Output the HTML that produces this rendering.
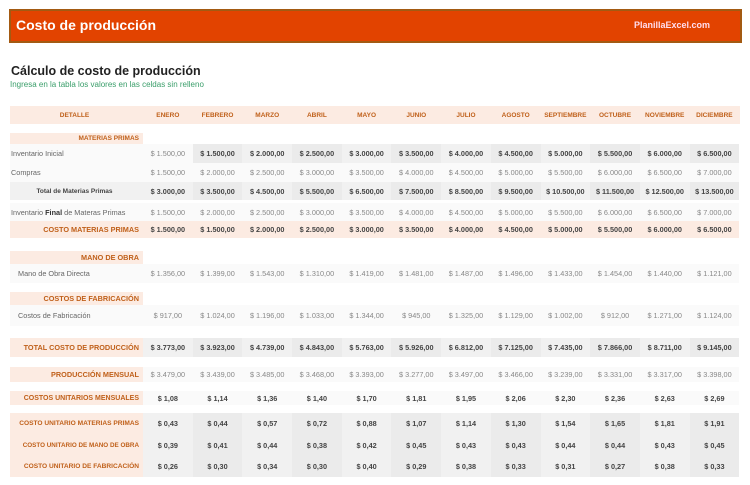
<!DOCTYPE html>
<html><head><meta charset="utf-8"><style>
body{margin:0;width:750px;height:485px;background:#fff;font-family:"Liberation Sans",sans-serif;position:relative;overflow:hidden}
.bar{position:absolute;left:9px;top:9px;width:729px;height:30px;background:#e24300;border:2px solid #a35a12}
.bar .t{position:absolute;left:5px;top:6px;color:#fff;font-weight:bold;font-size:14px}
.bar .s{position:absolute;right:30px;top:9px;color:#fde;font-weight:bold;font-size:9px}
.h1{position:absolute;left:11px;top:64px;font-size:12.5px;font-weight:bold;color:#222}
.h2{position:absolute;left:10px;top:80px;font-size:8px;color:#3a9e6a}
.r{position:absolute;left:10px;width:730px;display:flex;font-size:7.3px;color:#888;align-items:center}
.r .l{width:133px;height:100%;display:flex;align-items:center;justify-content:flex-end;padding-right:4px;box-sizing:border-box;font-weight:bold;color:#c0601a}
.r .l.n{justify-content:flex-start;font-weight:normal;color:#666;padding-left:1px}
.r .v{display:flex;height:100%}
.r .v span{width:49.7px;display:flex;align-items:center;justify-content:center}
.pk{background:#fcebe2}
.g span{background:#f1f1f1}.g span:nth-child(even){background:#ebebeb}
.w span{background:#fafafa}
.b span{font-weight:bold;color:#444}
.hd span{color:#c0601a;font-weight:bold;font-size:6.5px}
</style></head><body>
<div class="bar"><div class="t">Costo de producción</div><div class="s">PlanillaExcel.com</div></div>
<div class="h1">Cálculo de costo de producción</div>
<div class="h2">Ingresa en la tabla los valores en las celdas sin relleno</div>

<div class="r pk" style="top:106px;height:18px"><div class="l" style="justify-content:center;font-size:6.5px">DETALLE</div><div class="v hd"><span>ENERO</span><span>FEBRERO</span><span>MARZO</span><span>ABRIL</span><span>MAYO</span><span>JUNIO</span><span>JULIO</span><span>AGOSTO</span><span>SEPTIEMBRE</span><span>OCTUBRE</span><span>NOVIEMBRE</span><span>DICIEMBRE</span></div></div>

<div class="r" style="top:133px;height:11px"><div class="l pk" style="font-size:6.5px">MATERIAS PRIMAS</div></div>

<div class="r" style="top:144px;height:19px"><div class="l n" style="background:#fafafa">Inventario Inicial</div><div class="v g b"><span style="font-weight:normal;color:#888;background:#fafafa">$ 1.500,00</span><span>$ 1.500,00</span><span>$ 2.000,00</span><span>$ 2.500,00</span><span>$ 3.000,00</span><span>$ 3.500,00</span><span>$ 4.000,00</span><span>$ 4.500,00</span><span>$ 5.000,00</span><span>$ 5.500,00</span><span>$ 6.000,00</span><span>$ 6.500,00</span></div></div>

<div class="r" style="top:163px;height:19px"><div class="l n" style="background:#fafafa">Compras</div><div class="v w"><span>$ 1.500,00</span><span>$ 2.000,00</span><span>$ 2.500,00</span><span>$ 3.000,00</span><span>$ 3.500,00</span><span>$ 4.000,00</span><span>$ 4.500,00</span><span>$ 5.000,00</span><span>$ 5.500,00</span><span>$ 6.000,00</span><span>$ 6.500,00</span><span>$ 7.000,00</span></div></div>

<div class="r" style="top:182px;height:18px"><div class="l" style="background:#f1f1f1;color:#444;justify-content:center;font-size:6.5px">Total de Materias Primas</div><div class="v g b"><span>$ 3.000,00</span><span>$ 3.500,00</span><span>$ 4.500,00</span><span>$ 5.500,00</span><span>$ 6.500,00</span><span>$ 7.500,00</span><span>$ 8.500,00</span><span>$ 9.500,00</span><span>$ 10.500,00</span><span>$ 11.500,00</span><span>$ 12.500,00</span><span>$ 13.500,00</span></div></div>

<div class="r" style="top:203px;height:18px"><div class="l n" style="background:#fafafa">Inventario&nbsp;<b style="color:#333">Final</b>&nbsp;de Materas Primas</div><div class="v w"><span>$ 1.500,00</span><span>$ 2.000,00</span><span>$ 2.500,00</span><span>$ 3.000,00</span><span>$ 3.500,00</span><span>$ 4.000,00</span><span>$ 4.500,00</span><span>$ 5.000,00</span><span>$ 5.500,00</span><span>$ 6.000,00</span><span>$ 6.500,00</span><span>$ 7.000,00</span></div></div>

<div class="r" style="top:221px;height:17px"><div class="l pk">COSTO MATERIAS PRIMAS</div><div class="v pk b"><span style="background:none">$ 1.500,00</span><span style="background:none">$ 1.500,00</span><span style="background:none">$ 2.000,00</span><span style="background:none">$ 2.500,00</span><span style="background:none">$ 3.000,00</span><span style="background:none">$ 3.500,00</span><span style="background:none">$ 4.000,00</span><span style="background:none">$ 4.500,00</span><span style="background:none">$ 5.000,00</span><span style="background:none">$ 5.500,00</span><span style="background:none">$ 6.000,00</span><span style="background:none">$ 6.500,00</span></div></div>

<div class="r" style="top:251px;height:13px"><div class="l pk">MANO DE OBRA</div></div>
<div class="r" style="top:264px;height:19px"><div class="l n" style="background:#fafafa;padding-left:8px">Mano de Obra Directa</div><div class="v w"><span>$ 1.356,00</span><span>$ 1.399,00</span><span>$ 1.543,00</span><span>$ 1.310,00</span><span>$ 1.419,00</span><span>$ 1.481,00</span><span>$ 1.487,00</span><span>$ 1.496,00</span><span>$ 1.433,00</span><span>$ 1.454,00</span><span>$ 1.440,00</span><span>$ 1.121,00</span></div></div>

<div class="r" style="top:292px;height:13px"><div class="l pk">COSTOS DE FABRICACIÓN</div></div>
<div class="r" style="top:305px;height:21px"><div class="l n" style="background:#fafafa;padding-left:8px">Costos de Fabricación</div><div class="v w"><span>$ 917,00</span><span>$ 1.024,00</span><span>$ 1.196,00</span><span>$ 1.033,00</span><span>$ 1.344,00</span><span>$ 945,00</span><span>$ 1.325,00</span><span>$ 1.129,00</span><span>$ 1.002,00</span><span>$ 912,00</span><span>$ 1.271,00</span><span>$ 1.124,00</span></div></div>

<div class="r" style="top:338px;height:19px"><div class="l pk">TOTAL COSTO DE PRODUCCIÓN</div><div class="v g b"><span>$ 3.773,00</span><span>$ 3.923,00</span><span>$ 4.739,00</span><span>$ 4.843,00</span><span>$ 5.763,00</span><span>$ 5.926,00</span><span>$ 6.812,00</span><span>$ 7.125,00</span><span>$ 7.435,00</span><span>$ 7.866,00</span><span>$ 8.711,00</span><span>$ 9.145,00</span></div></div>

<div class="r" style="top:367px;height:15px"><div class="l pk">PRODUCCIÓN MENSUAL</div><div class="v w"><span>$ 3.479,00</span><span>$ 3.439,00</span><span>$ 3.485,00</span><span>$ 3.468,00</span><span>$ 3.393,00</span><span>$ 3.277,00</span><span>$ 3.497,00</span><span>$ 3.466,00</span><span>$ 3.239,00</span><span>$ 3.331,00</span><span>$ 3.317,00</span><span>$ 3.398,00</span></div></div>

<div class="r" style="top:391px;height:14px"><div class="l pk" style="font-size:7px">COSTOS UNITARIOS MENSUALES</div><div class="v w b"><span>$ 1,08</span><span>$ 1,14</span><span>$ 1,36</span><span>$ 1,40</span><span>$ 1,70</span><span>$ 1,81</span><span>$ 1,95</span><span>$ 2,06</span><span>$ 2,30</span><span>$ 2,36</span><span>$ 2,63</span><span>$ 2,69</span></div></div>

<div class="r" style="top:413px;height:21px"><div class="l pk" style="font-size:6.6px">COSTO UNITARIO MATERIAS PRIMAS</div><div class="v g b"><span>$ 0,43</span><span>$ 0,44</span><span>$ 0,57</span><span>$ 0,72</span><span>$ 0,88</span><span>$ 1,07</span><span>$ 1,14</span><span>$ 1,30</span><span>$ 1,54</span><span>$ 1,65</span><span>$ 1,81</span><span>$ 1,91</span></div></div>
<div class="r" style="top:434px;height:22px"><div class="l pk" style="font-size:6.3px">COSTO UNITARIO DE MANO DE OBRA</div><div class="v g b"><span>$ 0,39</span><span>$ 0,41</span><span>$ 0,44</span><span>$ 0,38</span><span>$ 0,42</span><span>$ 0,45</span><span>$ 0,43</span><span>$ 0,43</span><span>$ 0,44</span><span>$ 0,44</span><span>$ 0,43</span><span>$ 0,45</span></div></div>
<div class="r" style="top:456px;height:21px"><div class="l pk" style="font-size:6.6px">COSTO UNITARIO DE FABRICACIÓN</div><div class="v g b"><span>$ 0,26</span><span>$ 0,30</span><span>$ 0,34</span><span>$ 0,30</span><span>$ 0,40</span><span>$ 0,29</span><span>$ 0,38</span><span>$ 0,33</span><span>$ 0,31</span><span>$ 0,27</span><span>$ 0,38</span><span>$ 0,33</span></div></div>
</body></html>
